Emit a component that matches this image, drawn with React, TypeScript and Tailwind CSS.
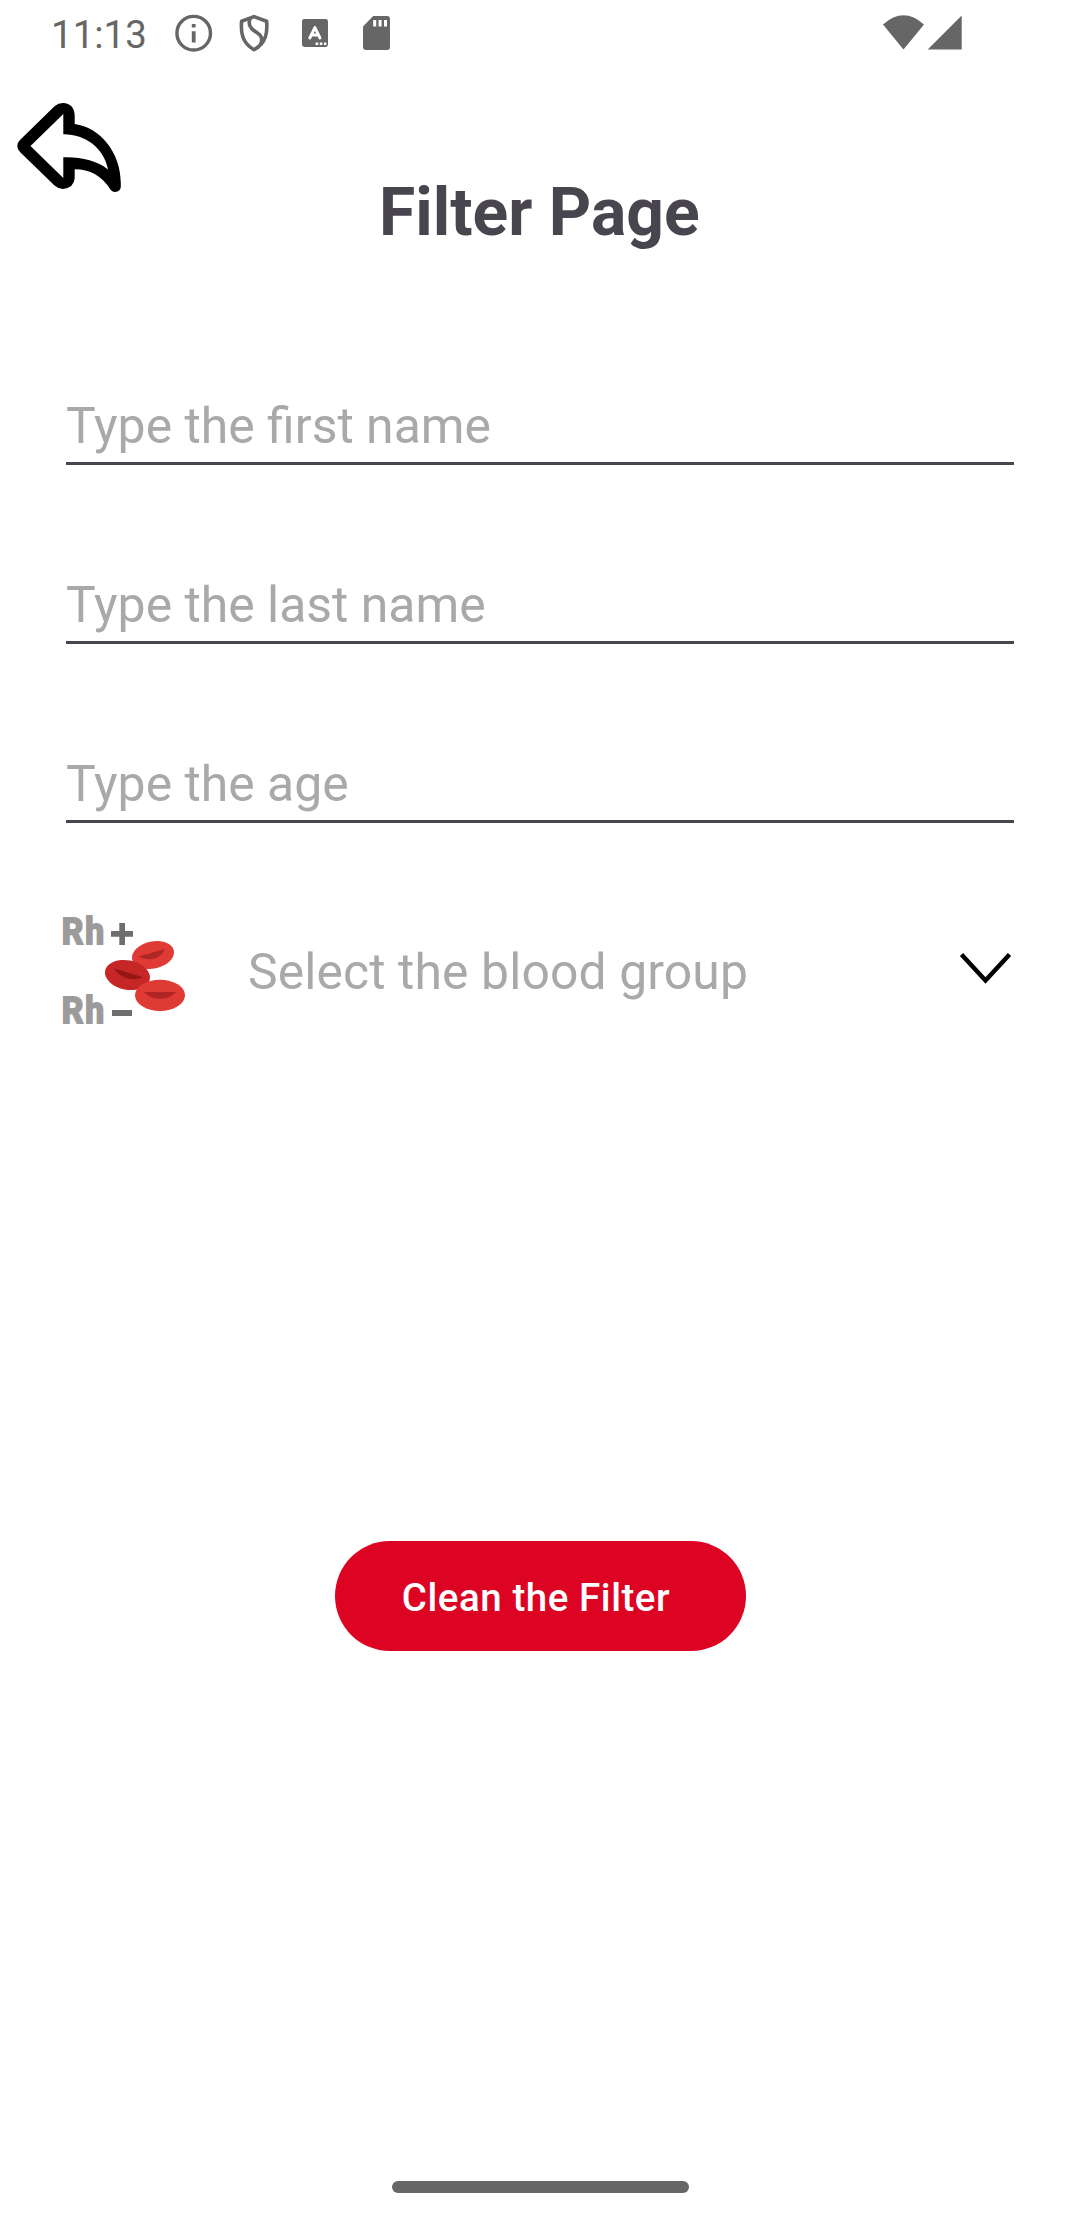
const ROBOTO = "font-['Roboto',sans-serif]";

function InfoIcon() {
  return (
    <svg width="38" height="38" viewBox="0 0 38 38" className="block">
      <circle cx="18.7" cy="19.2" r="16.8" fill="none" stroke="#666" strokeWidth="3.4" />
      <path d="M16.8 10h3.8v3.6h-3.8zM16.8 17.2h3.8v11.4h-3.8z" fill="#666" />
    </svg>
  );
}

function ShieldIcon() {
  return (
    <svg width="32" height="38" viewBox="0 0 32 38" className="block" fill="none" stroke="#666" strokeWidth="3.6" strokeLinejoin="round">
      <path d="M16 2.6 L28.6 7.2 Q29.4 17 27.4 22.8 Q24.6 30.8 16 35.8 Q7.4 30.8 4.8 22.8 Q2.8 17 3.6 7.2 Z" />
      <path d="M12.4 4 Q9.6 10.2 13.4 14.2 C16 17.2 20 18.8 22.4 21.6 Q24.8 24.8 22.6 30.6" />
    </svg>
  );
}

function LetterIcon() {
  return (
    <svg width="26" height="28" viewBox="0 0 26 28" className="block">
      <rect width="26" height="28" rx="2.4" fill="#666" />
      <path d="M7.8 19 L12.9 8.6 L18 19 M9.8 16h6.2" fill="none" stroke="#fff" strokeWidth="2.9" strokeLinecap="round" strokeLinejoin="round" />
      <path d="M13.6 23.6h2.6v2.4h-2.6zM17.8 23.6h2.6v2.4h-2.6zM22 23.6h2.4v2.4H22z" fill="#fff" />
    </svg>
  );
}

function CardIcon() {
  return (
    <svg width="27" height="34" viewBox="0 0 27 34" className="block">
      <path d="M10.2 0H24a3 3 0 0 1 3 3v28a3 3 0 0 1-3 3H3a3 3 0 0 1-3-3V10.4z" fill="#666" />
      <path d="M10.2 4h3v6.6h-3zM15.6 4h3v6.6h-3zM21 4h3v6.6h-3z" fill="#fff" />
    </svg>
  );
}

function BackArrow() {
  return (
    <svg width="104" height="90" viewBox="17 102 104 90" className="block">
      <path
        fillRule="evenodd"
        d="M17.3 146 Q17.3 142.600 20 140 L54.500 106.300 Q58.500 102.800 63 102.900 Q74 103.500 74.700 115 V124 C100 127.500 120.700 152 120.800 183 V187 Q120.300 191.700 115 192 Q112.500 192 110.800 190 C102 176 90 169.300 74.700 169.300 V178 Q74 188 63 188.900 Q58.500 189 54.500 185.500 L20 152 Q17.300 149.500 17.300 146 Z M30.500 146 L63.300 178 V157.300 C80 156.600 97 160.500 108 169.500 C104 148 85 134 63.300 134.300 V114 Z"
        fill="#000"
      />
    </svg>
  );
}

function BloodIcon() {
  return (
    <svg width="130" height="132" viewBox="56 904 130 132" className="block">
      <g fontFamily="Roboto, sans-serif" fontWeight="700" fontSize="37" letterSpacing="2" fill="#9b9b9b" stroke="#9b9b9b" strokeWidth="2">
        <text transform="translate(61.800 944) scale(0.91 1)">Rh</text>
        <text transform="translate(61.800 1023) scale(0.91 1)">Rh</text>
      </g>
      <path d="M111 931h8.300v-8h5.700v8h8v5.700h-8v8.300h-5.700v-8.300H111zM112 1010h20v6h-20z" fill="#6e6e6e" />
      <ellipse cx="153" cy="955" rx="21.300" ry="13.500" transform="rotate(-12 153 955)" fill="#df3a34" />
      <path d="M138.300 956.600 L165 949 Q161 957.500 152 959 Q144 960 138.300 956.600Z" fill="#b02626" />
      <ellipse cx="127.500" cy="975" rx="22.800" ry="14.700" transform="rotate(11 127.500 975)" fill="#c62626" />
      <path d="M114 968.300 L143 977.200 Q136 980.300 128 978.500 Q118.500 976 114 968.300Z" fill="#961616" />
      <ellipse cx="160" cy="995.300" rx="25" ry="15.600" fill="#df3a34" />
      <path d="M143.700 992 H176.300 Q169.500 999 160 999 Q150.500 999 143.700 992Z" fill="#b02626" />
    </svg>
  );
}

function Field({ label }: { label: string }) {
  return (
    <div className="flex h-[179px] flex-col justify-end">
      <div className="mb-[7px] text-[49.9px] leading-[58px] text-[#a9a9a9]">{label}</div>
      <div className="h-[3px] shrink-0 bg-[#49454f]" />
    </div>
  );
}

export default function App() {
  return (
    <div className={`${ROBOTO} flex h-[2220px] w-[1080px] flex-col overflow-hidden bg-white`}>
      <div className="flex h-[66px] shrink-0 items-center pl-[51px] pr-[117px] text-[#666]">
        <div className="w-[124px] pt-[3px] text-[38.5px] leading-[45px]">11:13</div>
        <InfoIcon />
        <div className="ml-[25px]"><ShieldIcon /></div>
        <div className="ml-[32px]"><LetterIcon /></div>
        <div className="ml-[35px]"><CardIcon /></div>
        <svg width="80" height="36" viewBox="883 15 80 36" className="ml-auto block">
          <path d="M883 24.500 Q903.500 6 924 24.500 L903.500 49.500Z M961.700 15.500 V49.500 H927.700Z" fill="#666" />
        </svg>
      </div>
      <div className="h-[36px] shrink-0" />
      <div className="flex h-[184px] shrink-0 items-start pl-[17px]">
        <BackArrow />
        <h1 className="ml-[258px] mt-[72px] text-[66px] font-bold leading-[78px] text-[#49454f]">Filter Page</h1>
      </div>
      <div className="flex h-[537px] shrink-0 flex-col px-[66px]">
        <Field label="Type the first name" />
        <Field label="Type the last name" />
        <Field label="Type the age" />
      </div>
      <div className="mt-[81px] flex h-[132px] shrink-0 items-center pl-[56px] pr-[67px]">
        <BloodIcon />
        <div className="ml-[62px] pt-[3px] text-[49.8px] leading-[58px] tracking-[0.13px] text-[#a9a9a9]">Select the blood group</div>
        <svg width="54" height="34" viewBox="959 951 54 34" className="mb-[4px] ml-auto block">
          <path d="M961.500 954.500 L985.500 980.500 L1009.500 954.500" fill="none" stroke="#000" strokeWidth="4.500" />
        </svg>
      </div>
      <button className="ml-[335px] mt-[505px] flex h-[110px] w-[411px] shrink-0 items-center justify-center rounded-full bg-[#dc0323] pr-[9px] pt-[3px] text-[38.5px] font-medium tracking-[0.55px] text-white">
        Clean the Filter
      </button>
      <div className="mx-auto mb-[27px] mt-auto h-[12px] w-[297px] rounded-full bg-[#666]" />
    </div>
  );
}
